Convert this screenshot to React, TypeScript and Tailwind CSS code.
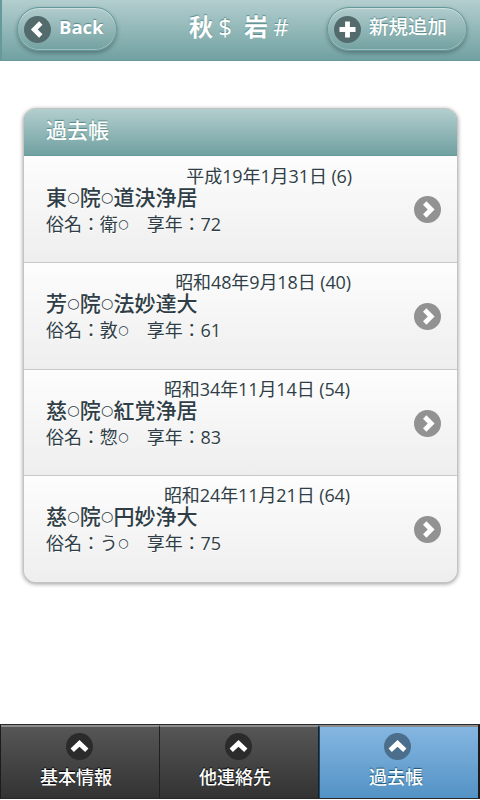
import React from 'react';

const RECORDS = [
  { date: '平成19年1月31日 (6)', dateEnd: 'pr-[105px]', title: '東○院○道決浄居', detail: '俗名：衛○　享年：72', height: 'h-[107px]', pad: 'pt-[9px]' },
  { date: '昭和48年9月18日 (40)', dateEnd: 'pr-[106px]', title: '芳○院○法妙達大', detail: '俗名：敦○　享年：61', height: 'h-[107px]', pad: 'pt-[8px]' },
  { date: '昭和34年11月14日 (54)', dateEnd: 'pr-[107px]', title: '慈○院○紅覚浄居', detail: '俗名：惣○　享年：83', height: 'h-[106px]', pad: 'pt-[8px]' },
  { date: '昭和24年11月21日 (64)', dateEnd: 'pr-[107px]', title: '慈○院○円妙浄大', detail: '俗名：う○　享年：75', height: 'h-[106px]', pad: 'pt-[8px]' },
];

const TABS = [
  { label: '基本情報', active: false },
  { label: '他連絡先', active: false },
  { label: '過去帳', active: true },
];

const PATHS = {
  left: 'M16.8 7L10.3 13.5L16.8 20',
  right: 'M10.7 7L17.2 13.5L10.7 20',
  up: 'M6.2 17.2L13.5 10.4L20.8 17.2',
  plus: 'M13.5 5.5V21.5M5.5 13.5H21.5',
};

function Icon({ name, disc }: { name: keyof typeof PATHS; disc: string }) {
  return (
    <svg className="block h-[27px] w-[27px] shrink-0" viewBox="0 0 27 27" fill="none">
      <circle cx="13.5" cy="13.5" r="13.5" className={disc} />
      <path d={PATHS[name]} stroke="#fff" strokeWidth="4.8" />
    </svg>
  );
}

// The circle is narrower than a full-width kanji
function Masked({ text }: { text: string }) {
  return (
    <>
      {text.split('').map((char, index) =>
        char === '○' ? (
          <span key={index} className="relative -top-[3px] inline-flex w-[0.61em] justify-center leading-none">
            <span className="font-['DejaVu_Sans',sans-serif] text-[0.68em] leading-none font-normal">○</span>
          </span>
        ) : (
          <React.Fragment key={index}>{char}</React.Fragment>
        ),
      )}
    </>
  );
}

function BarButton({ icon, label, className }: { icon: 'left' | 'plus'; label: string; className: string }) {
  return (
    <button
      className={`flex h-[44px] shrink-0 items-center rounded-full border border-[#62999a] bg-gradient-to-b from-[#b1cccd] to-[#73a1a1] pl-[6px] text-white shadow-[0_2px_4px_rgba(0,0,0,0.3),inset_0_1px_1px_rgba(255,255,255,0.4),inset_0_-1px_0_rgba(255,255,255,0.3)] [text-shadow:0_-1px_1px_#568889] ${className}`}
    >
      <Icon name={icon} disc="fill-[#536b6c]" />
      <span className="-mt-[4px] ml-[8px] whitespace-nowrap">{label}</span>
    </button>
  );
}

export default function App() {
  return (
    <div className="flex h-[800px] w-[480px] flex-col overflow-hidden bg-white font-['Open_Sans','Noto_Sans_CJK_JP',sans-serif] text-[#2f3e46]">
      <header className="flex h-[61px] shrink-0 items-start border-b border-l-2 border-[#66999a] bg-gradient-to-b from-[#b3cecf] to-[#71a1a1] pt-[7px] pl-[15px]">
        <BarButton icon="left" label="Back" className="w-[100px] text-[18.5px] font-bold" />
        <h1 className="ml-[72px] flex h-[40px] w-[138px] shrink-0 items-center text-[24px] font-bold text-white [text-shadow:0_-1px_1px_#568889]">
          秋<span className="w-[24px] text-center font-normal">$</span>
          <span className="ml-[7px]">岩</span>
          <span className="ml-px w-[24px] text-center font-normal">#</span>
        </h1>
        <BarButton icon="plus" label="新規追加" className="w-[140px] text-[19.5px] font-medium" />
      </header>

      <main className="grow pt-[47px] pl-[23px]">
        <ul className="w-[435px] overflow-hidden rounded-[13px] border border-[#c4c4c4] bg-[#eee] shadow-[0_1px_4px_rgba(0,0,0,0.4)]">
          <li className="-mx-px -mt-px flex h-[48px] items-center rounded-t-[12px] border border-[#66999a] bg-gradient-to-b from-[#b3cecf] to-[#71a1a1] pb-[3px] pl-[22px] text-[21px] font-medium text-white [text-shadow:0_-1px_1px_#568889]">
            過去帳
          </li>
          {RECORDS.map((record) => (
            <li
              key={record.date}
              className={`flex border-b border-[#c8c8c8] bg-gradient-to-b from-[#fdfdfd] to-[#eeeeee] [text-shadow:0_1px_0_#fff] last:border-b-0 ${record.height}`}
            >
              <div className={`grow pl-[22px] whitespace-nowrap ${record.pad}`}>
                <p className={`-mr-[43px] h-[22px] text-right text-[18px] leading-[22px] tracking-[-0.1px] ${record.dateEnd}`}>
                  {record.date}
                </p>
                <h3 className="h-[21px] text-[21px] leading-[21px] font-medium">
                  <Masked text={record.title} />
                </h3>
                <p className="mt-[4px] h-[24px] text-[18px] leading-[24px] tracking-[-0.05px]">
                  <Masked text={record.detail} />
                </p>
              </div>
              <div className="mt-[40px] mr-[16px]">
                <Icon name="right" disc="fill-[#929292]" />
              </div>
            </li>
          ))}
        </ul>
      </main>

      <nav className="flex h-[75px] w-full shrink-0 border-t border-b border-[#292929] bg-[#1c1c1c] pl-px">
        {TABS.map((tab) => (
          <a
            key={tab.label}
            className={`flex w-[159px] flex-col items-center border-t-2 border-t-[#8b8b8b] bg-gradient-to-b pt-[6px] text-[18px] leading-[24px] font-medium text-white ${
              tab.active
                ? 'border-l border-l-[#145072] from-[#85b6e1] to-[#5393c5] pr-[4px] [text-shadow:0_-1px_1px_#145072]'
                : 'border-r border-r-[#202020] from-[#565656] to-[#333333] pr-[1px] [text-shadow:0_-1px_1px_#000]'
            }`}
          >
            <Icon name="up" disc={tab.active ? 'fill-[#4b6e8c]' : 'fill-[#2b2b2b]'} />
            <span className={tab.active ? 'mt-[5px] -ml-[2px]' : 'mt-[5px] -ml-[7px]'}>{tab.label}</span>
          </a>
        ))}
      </nav>
      <div className="h-px shrink-0" />
    </div>
  );
}
